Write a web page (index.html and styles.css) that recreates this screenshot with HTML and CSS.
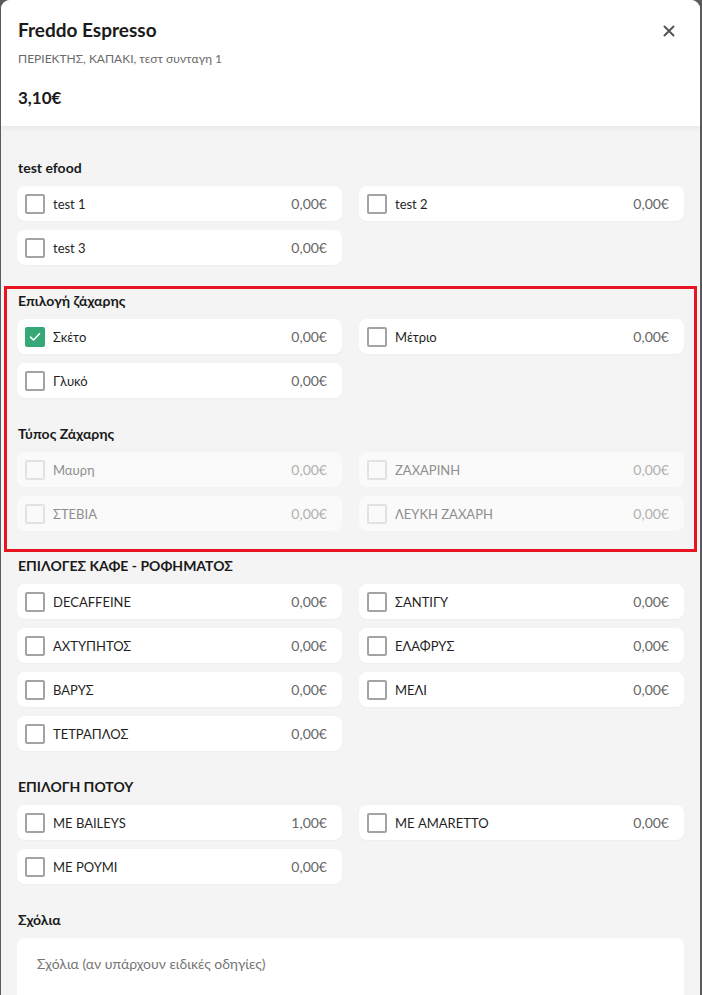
FILE: index.html
```html
<!DOCTYPE html>
<html lang="el">
<head>
<meta charset="utf-8">
<link rel="stylesheet" href="styles.css">
</head>
<body>
<div class="modal">
  <header class="head">
    <div class="head-text">
      <h1 class="title">Freddo Espresso</h1>
      <p class="sub">ΠΕΡΙΕΚΤΗΣ, ΚΑΠΑΚΙ, τεστ συνταγη 1</p>
      <p class="price">3,10€</p>
    </div>
    <button class="close" aria-label="close">
      <svg width="12" height="12" viewBox="0 0 12 12"><path d="M1.5 1.5L10.5 10.5M10.5 1.5L1.5 10.5" stroke="#555" stroke-width="2" stroke-linecap="round"/></svg>
    </button>
  </header>
  <main class="content">
    <section class="sec first">
      <h2 class="sec-title">test efood</h2>
      <div class="grid">
        <label class="opt"><span class="box"></span><span class="name">test 1</span><span class="amt">0,00€</span></label>
        <label class="opt"><span class="box"></span><span class="name">test 2</span><span class="amt">0,00€</span></label>
        <label class="opt"><span class="box"></span><span class="name">test 3</span><span class="amt">0,00€</span></label>
      </div>
    </section>
    <div class="mark">
      <section class="sec inmark">
        <h2 class="sec-title">Επιλογή ζάχαρης</h2>
        <div class="grid">
          <label class="opt"><span class="box on"><svg width="12" height="10" viewBox="0 0 12 10"><path d="M1.5 5.2L4.5 8L10.5 1.8" fill="none" stroke="#fff" stroke-width="1.6" stroke-linecap="round" stroke-linejoin="round"/></svg></span><span class="name">Σκέτο</span><span class="amt">0,00€</span></label>
          <label class="opt"><span class="box"></span><span class="name">Μέτριο</span><span class="amt">0,00€</span></label>
          <label class="opt"><span class="box"></span><span class="name">Γλυκό</span><span class="amt">0,00€</span></label>
        </div>
      </section>
      <section class="sec">
        <h2 class="sec-title">Τύπος Ζάχαρης</h2>
        <div class="grid">
          <label class="opt off"><span class="box"></span><span class="name">Μαυρη</span><span class="amt">0,00€</span></label>
          <label class="opt off"><span class="box"></span><span class="name">ΖΑΧΑΡΙΝΗ</span><span class="amt">0,00€</span></label>
          <label class="opt off"><span class="box"></span><span class="name">ΣΤΕΒΙΑ</span><span class="amt">0,00€</span></label>
          <label class="opt off"><span class="box"></span><span class="name">ΛΕΥΚΗ ΖΑΧΑΡΗ</span><span class="amt">0,00€</span></label>
        </div>
      </section>
    </div>
    <section class="sec aftermark">
      <h2 class="sec-title">ΕΠΙΛΟΓΕΣ ΚΑΦΕ - ΡΟΦΗΜΑΤΟΣ</h2>
      <div class="grid">
        <label class="opt"><span class="box"></span><span class="name">DECAFFEINE</span><span class="amt">0,00€</span></label>
        <label class="opt"><span class="box"></span><span class="name">ΣΑΝΤΙΓΥ</span><span class="amt">0,00€</span></label>
        <label class="opt"><span class="box"></span><span class="name">ΑΧΤΥΠΗΤΟΣ</span><span class="amt">0,00€</span></label>
        <label class="opt"><span class="box"></span><span class="name">ΕΛΑΦΡΥΣ</span><span class="amt">0,00€</span></label>
        <label class="opt"><span class="box"></span><span class="name">ΒΑΡΥΣ</span><span class="amt">0,00€</span></label>
        <label class="opt"><span class="box"></span><span class="name">ΜΕΛΙ</span><span class="amt">0,00€</span></label>
        <label class="opt"><span class="box"></span><span class="name">ΤΕΤΡΑΠΛΟΣ</span><span class="amt">0,00€</span></label>
      </div>
    </section>
    <section class="sec">
      <h2 class="sec-title">ΕΠΙΛΟΓΗ ΠΟΤΟΥ</h2>
      <div class="grid">
        <label class="opt"><span class="box"></span><span class="name">ΜΕ BAILEYS</span><span class="amt">1,00€</span></label>
        <label class="opt"><span class="box"></span><span class="name">ΜΕ AMARETTO</span><span class="amt">0,00€</span></label>
        <label class="opt"><span class="box"></span><span class="name">ΜΕ ΡΟΥΜΙ</span><span class="amt">0,00€</span></label>
      </div>
    </section>
    <section class="sec">
      <h2 class="sec-title">Σχόλια</h2>
      <div class="comments">Σχόλια (αν υπάρχουν ειδικές οδηγίες)</div>
    </section>
  </main>
</div>
</body>
</html>
```
FILE: styles.css
```css
* { box-sizing: border-box; }
html, body { margin: 0; height: 100%; }
body {
  background: #5b5b5b;
  font-family: Lato, "Noto Sans", sans-serif;
  color: #1c1c1c;
  padding: 0 1px 0 1px;
  overflow: hidden;
}
.modal {
  width: 699px;
  height: 995px;
  background: #f4f4f4;
  border-radius: 9px 9px 0 0;
  overflow: hidden;
}
.head {
  background: #fff;
  height: 126px;
  display: flex;
  justify-content: space-between;
  align-items: flex-start;
  padding: 0 25px 0 17px;
  box-shadow: 0 2px 6px rgba(0,0,0,0.06);
  position: relative;
}
.title {
  margin: 18px 0 0;
  font-size: 19px;
  line-height: 24px;
  font-weight: 700;
  color: #1a1a1a;
}
.sub {
  margin: 10px 0 0;
  font-size: 12px;
  line-height: 14px;
  color: #6a6a6a;
}
.price {
  margin: 22px 0 0;
  font-size: 17px;
  line-height: 20px;
  font-weight: 700;
  color: #1a1a1a;
}
.close {
  border: 0;
  background: none;
  padding: 0;
  margin-top: 25px;
  width: 12px;
  height: 12px;
  display: flex;
}
.content {
  padding: 0 16px 0 16px;
}
.sec { margin-top: 26px; }
.sec.first { margin-top: 32px; }
.sec-title {
  margin: 0 0 8px 1px;
  font-size: 14px;
  line-height: 20px;
  font-weight: 700;
  color: #1a1a1a;
}
.grid {
  display: grid;
  grid-template-columns: 1fr 1fr;
  column-gap: 17px;
  row-gap: 9px;
}
.opt {
  height: 35px;
  background: #fff;
  border-radius: 8px;
  display: flex;
  align-items: center;
  padding: 0 15px 0 8px;
  box-shadow: 0 1px 2px rgba(0,0,0,0.03);
}
.box {
  width: 20px;
  height: 20px;
  border: 2px solid #a3a3a3;
  border-radius: 2px;
  flex: none;
  display: flex;
  align-items: center;
  justify-content: center;
}
.box.on {
  background: #36a877;
  border-color: #36a877;
}
.name {
  margin-left: 8px;
  font-size: 13px;
  color: #1f1f1f;
  flex: 1;
}
.amt {
  font-size: 14px;
  color: #666;
}
.opt.off { background: #fafafa; box-shadow: none; }
.opt.off .box { border-color: #e2e2e2; }
.opt.off .name { color: #8e8e8e; }
.opt.off .amt { color: #b0b0b0; }
.mark {
  margin: 21px -13px 0 -13px;
  border: 3px solid #e8141f;
  padding: 2px 10px 18px 10px;
}
.sec.inmark { margin-top: 0; }
.sec.aftermark { margin-top: 4px; }
.comments {
  background: #fff;
  border-radius: 8px;
  height: 70px;
  padding: 16px 20px;
  font-size: 14px;
  line-height: 20px;
  color: #757575;
}
```
